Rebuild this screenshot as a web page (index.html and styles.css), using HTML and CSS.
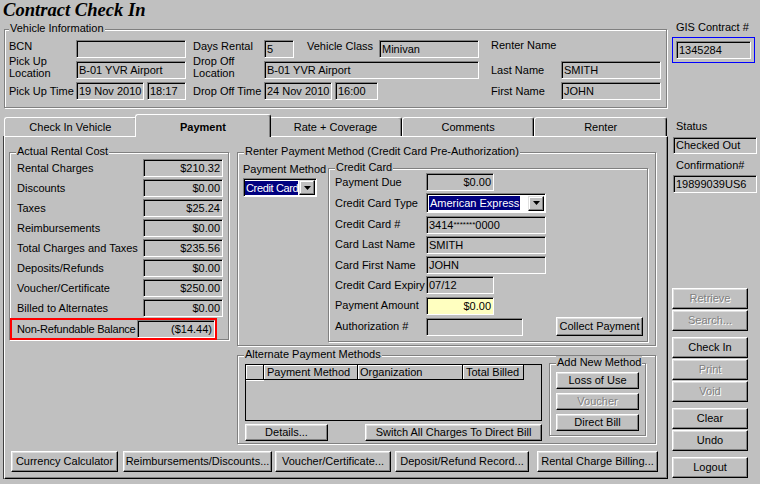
FILE: index.html
```html
<!DOCTYPE html>
<html>
<head>
<meta charset="utf-8">
<title>Contract Check In</title>
<link rel="stylesheet" href="styles.css">
</head>
<body>
<div class="win">
  <div class="leftcol">
    <h1 class="title">Contract Check In</h1>

    <div class="group vehicle">
      <span class="glabel gl-v">Vehicle Information</span>
      <div class="vgrid">
        <span class="lbl r1">BCN</span>
        <div class="fld"></div>
        <span class="lbl pl7 r1">Days Rental</span>
        <div class="sub">
          <div class="fld w30">5</div>
          <span class="lbl vclass r1">Vehicle Class</span>
          <div class="fld w100">Minivan</div>
        </div>
        <span class="lbl pl12 span2 rn">Renter Name</span>

        <span class="lbl two">Pick Up<br>Location</span>
        <div class="fld">B-01 YVR Airport</div>
        <span class="lbl pl7 two">Drop Off<br>Location</span>
        <div class="fld">B-01 YVR Airport</div>
        <span class="lbl pl12">Last Name</span>
        <div class="fld">SMITH</div>

        <span class="lbl">Pick Up Time</span>
        <div class="sub gap3"><div class="fld w68">19 Nov 2010</div><div class="fld w39">18:17</div></div>
        <span class="lbl pl7">Drop Off Time</span>
        <div class="sub gap3"><div class="fld w68">24 Nov 2010</div><div class="fld w43">16:00</div></div>
        <span class="lbl pl12">First Name</span>
        <div class="fld">JOHN</div>
      </div>
    </div>

    <div class="tabs">
      <div class="tab">Check In Vehicle</div>
      <div class="tab sel">Payment</div>
      <div class="tab">Rate + Coverage</div>
      <div class="tab">Comments</div>
      <div class="tab">Renter</div>
    </div>

    <div class="panel">
      <div class="pbody">
        <div class="group arc">
          <span class="glabel">Actual Rental Cost</span>
          <div class="arow"><span>Rental Charges</span><div class="fld val">$210.32</div></div>
          <div class="arow"><span>Discounts</span><div class="fld val">$0.00</div></div>
          <div class="arow"><span>Taxes</span><div class="fld val">$25.24</div></div>
          <div class="arow"><span>Reimbursements</span><div class="fld val">$0.00</div></div>
          <div class="arow"><span>Total Charges and Taxes</span><div class="fld val">$235.56</div></div>
          <div class="arow"><span>Deposits/Refunds</span><div class="fld val">$0.00</div></div>
          <div class="arow"><span>Voucher/Certificate</span><div class="fld val">$250.00</div></div>
          <div class="arow"><span>Billed to Alternates</span><div class="fld val">$0.00</div></div>
          <div class="arow hl"><span>Non-Refundable Balance</span><div class="fld val">($14.44)</div></div>
        </div>

        <div class="rcol">
          <div class="group rpm">
            <span class="glabel">Renter Payment Method (Credit Card Pre-Authorization)</span>
            <div class="pmcol">
              <div class="pmlbl">Payment Method</div>
              <div class="combo pm">
                <span class="hsel">Credit Card</span>
                <span class="ddb"><svg width="7" height="4" viewBox="0 0 7 4"><polygon points="0,0 7,0 3.5,4" fill="#000"/></svg></span>
              </div>
            </div>
            <div class="group cc">
              <span class="glabel">Credit Card</span>
              <div class="ccgrid">
                <span class="lbl">Payment Due</span>
                <div class="fld w68 val">$0.00</div>
                <span class="lbl">Credit Card Type</span>
                <div class="combo cct">
                  <span class="hsel">American Express</span>
                  <span class="ddb"><svg width="7" height="4" viewBox="0 0 7 4"><polygon points="0,0 7,0 3.5,4" fill="#000"/></svg></span>
                </div>
                <span class="lbl">Credit Card #</span>
                <div class="fld w120">3414<span class="ast">*******</span>0000</div>
                <span class="lbl">Card Last Name</span>
                <div class="fld w120">SMITH</div>
                <span class="lbl">Card First Name</span>
                <div class="fld w120">JOHN</div>
                <span class="lbl">Credit Card Expiry</span>
                <div class="fld w68">07/12</div>
                <span class="lbl">Payment Amount</span>
                <div class="fld w68 val yellow">$0.00</div>
                <span class="lbl">Authorization #</span>
                <div class="sub"><div class="fld w97"></div><button class="btn collect">Collect Payment</button></div>
              </div>
            </div>
          </div>

          <div class="group apm">
            <span class="glabel">Alternate Payment Methods</span>
            <div class="apm-left">
              <div class="agrid">
                <div class="ghead">
                  <div class="gc c0"></div>
                  <div class="gc c1">Payment Method</div>
                  <div class="gc c2">Organization</div>
                  <div class="gc c3">Total Billed</div>
                </div>
                <div class="ind"></div>
              </div>
              <div class="abtns">
                <button class="btn sm details">Details...</button>
                <button class="btn sm switch">Switch All Charges To Direct Bill</button>
              </div>
            </div>
            <div class="group anm">
              <span class="glabel">Add New Method</span>
              <button class="btn sm">Loss of Use</button>
              <button class="btn sm dis">Voucher</button>
              <button class="btn sm">Direct Bill</button>
            </div>
          </div>
        </div>
      </div>

      <div class="brow">
        <button class="btn b1">Currency Calculator</button>
        <button class="btn b2">Reimbursements/Discounts...</button>
        <button class="btn b3">Voucher/Certificate...</button>
        <button class="btn b4">Deposit/Refund Record...</button>
        <button class="btn b5">Rental Charge Billing...</button>
      </div>
    </div>
  </div>

  <div class="rightcol">
    <span class="rl gis">GIS Contract #</span>
    <div class="focus"><div class="fld w75">1345284</div></div>
    <span class="rl status">Status</span>
    <div class="fld rf h17">Checked Out</div>
    <span class="rl conf">Confirmation#</span>
    <div class="fld rf conff">19899039US6</div>

    <div class="rbtns">
      <button class="btn dis">Retrieve</button>
      <button class="btn dis">Search...</button>
      <button class="btn sep">Check In</button>
      <button class="btn dis">Print</button>
      <button class="btn dis">Void</button>
      <button class="btn sep">Clear</button>
      <button class="btn">Undo</button>
      <button class="btn sep">Logout</button>
    </div>
  </div>
</div>
</body>
</html>
```

FILE: styles.css
```css
* { box-sizing: border-box; }
html, body { margin: 0; padding: 0; }
body {
  background: #c0c0c0;
  font: 11px/13px "Liberation Sans", Arial, sans-serif;
  color: #000;
}
.win { display: flex; width: 760px; height: 484px; overflow: hidden; }
.leftcol { width: 668px; flex: none; }
.rightcol { width: 86px; margin-left: 4px; flex: none; display: flex; flex-direction: column; }

.title {
  margin: 0;
  height: 29px;
  padding-left: 3px;
  font: italic bold 18.6px/20px "Liberation Serif", "Times New Roman", serif;
}

/* etched group box */
.group {
  position: relative;
  border: 1px solid #808080;
  box-shadow: inset 1px 1px 0 #fff, 1px 1px 0 #fff;
}
.glabel {
  position: absolute;
  top: -8px;
  left: 6px;
  padding: 0 1px;
  background: #c0c0c0;
  line-height: 13px;
  white-space: nowrap;
}
.gl-v { left: 4px; }

/* sunken field */
.fld {
  height: 18px;
  border: 1px solid;
  border-color: #808080 #fff #fff #808080;
  box-shadow: inset 1px 1px 0 #000;
  padding: 0 2px;
  line-height: 16px;
  white-space: nowrap;
  overflow: hidden;
  background: #c0c0c0;
}
.val { text-align: right; }
.yellow { background: #ffffc0; }
.ast { font-size: 8px; vertical-align: 2px; letter-spacing: 0; }
.w30 { width: 30px; }
.w39 { width: 39px; }
.w43 { width: 43px; }
.w68 { width: 68px; }
.w75 { width: 75px; }
.w97 { width: 97px; }
.w100 { width: 100px; }
.w120 { width: 120px; }

/* raised button */
.btn {
  -webkit-appearance: none;
  appearance: none;
  margin: 0;
  padding: 0;
  height: 21px;
  border: 1px solid;
  border-color: #fff #000 #000 #fff;
  box-shadow: inset -1px -1px 0 #808080, inset 1px 1px 0 #dfdfdf;
  background: #c0c0c0;
  font: inherit;
  line-height: 19px;
  color: #000;
  text-align: center;
  white-space: nowrap;
}
.btn.sm { height: 17px; line-height: 15px; }
.btn.dis { color: #808080; text-shadow: 1px 1px 0 #fff; }

/* vehicle information */
.vehicle { margin-left: 4px; width: 663px; height: 79px; }
.vgrid {
  display: grid;
  grid-template-columns: 67px 110px 78px 215px 82px 100px;
  grid-template-rows: 18px 18px 18px;
  row-gap: 3px;
  padding: 10px 0 0 4px;
}
.lbl { align-self: center; white-space: nowrap; }
.pl7 { padding-left: 7px; }
.pl12 { padding-left: 12px; }
.span2 { grid-column: span 2; }
.r1 { margin-top: -6px; }
.rn { margin-top: -8px; }
.two { line-height: 12px; margin-top: -6px; }
.sub { display: flex; align-items: center; }
.gap3 { gap: 3px; }
.vclass { width: 85px; padding-left: 13px; align-self: center; }

/* tabs */
.tabs {
  display: flex;
  align-items: flex-end;
  margin: 5px 0 0 4px;
  width: 663px;
  height: 23px;
}
.tab {
  flex: 1 1 0;
  box-sizing: content-box;
  height: 18px;
  line-height: 18px;
  text-align: center;
  border-top: 1px solid #fff;
  border-left: 1px solid #fff;
  border-right: 1px solid #000;
  border-radius: 3px 3px 0 0;
  box-shadow: inset -1px 0 0 #808080;
  background: #c0c0c0;
  white-space: nowrap;
}
.tab.sel {
  position: relative;
  z-index: 1;
  font-weight: bold;
  padding: 3px 2px 1px;
  margin: 0 -2px -1px;
}

/* panel */
.panel {
  margin-left: 4px;
  width: 664px;
  height: 343px;
  border: 1px solid;
  border-color: #fff #000 #000 #fff;
  box-shadow: inset -1px -1px 0 #808080, -1px 0 0 #404040;
}
.pbody { display: flex; align-items: flex-start; padding: 15px 0 0 4px; }

/* actual rental cost */
.arc { width: 220px; height: 188px; padding: 6px 5px 0 0; display: flex; flex-direction: column; gap: 2px; }
.arow { display: flex; align-items: center; justify-content: space-between; height: 18px; padding-left: 7px; }
.arow span { white-space: nowrap; }
.arow .fld { width: 80px; flex: none; }
.arow.hl {
  margin: 1px 8px 0 2px;
  padding-left: 5px;
  outline: 2px solid #ff0000;
}
.arow.hl span { letter-spacing: -0.2px; }
.arow.hl .fld { width: 78px; }

.rcol { margin-left: 8px; display: flex; flex-direction: column; }

/* renter payment method */
.rpm { width: 419px; height: 194px; display: flex; align-items: flex-start; padding-left: 5px; }
.pmcol { width: 85px; margin-top: 10px; flex: none; }
.pmlbl { line-height: 13px; }

.combo {
  display: flex;
  align-items: center;
  justify-content: space-between;
  border: 1px solid;
  border-color: #808080 #fff #fff #808080;
  box-shadow: inset 1px 1px 0 #000;
  padding: 1px 1px 1px 2px;
  background: #fff;
}
.combo.pm { margin-top: 2px; width: 74px; height: 19px; padding-left: 1px; }
.combo.pm .hsel { letter-spacing: -0.35px; padding: 0 0 0 1px; }
.combo.cct { width: 120px; height: 20px; background: #fff; }
.hsel {
  background: #000080;
  color: #fff;
  line-height: 14px;
  padding: 0 1px;
  white-space: nowrap;
  overflow: hidden;
  flex: 0 1 auto;
  min-width: 0;
}
.ddb {
  flex: none;
  width: 16px;
  height: 15px;
  display: flex;
  align-items: center;
  justify-content: center;
  background: #c0c0c0;
  border: 1px solid;
  border-color: #dfdfdf #000 #000 #dfdfdf;
  box-shadow: inset -1px -1px 0 #808080, inset 1px 1px 0 #fff;
}
.ddb svg { display: block; }

.cc { margin: 15px 0 0 0; width: 320px; height: 174px; flex: none; }
.ccgrid {
  display: grid;
  grid-template-columns: 91px 1fr;
  grid-template-rows: 18px 20px 18px 18px 18px 18px 18px 19px;
  row-gap: 2.3px;
  padding: 4px 0 0 6px;
  align-items: center;
}
.collect { margin-left: 33px; width: 87px; height: 19px; line-height: 17px; }

/* alternate payment methods */
.apm { margin-top: 9px; width: 419px; height: 89px; display: flex; align-items: flex-start; padding: 8px 0 0 7px; }
.apm-left { width: 297px; flex: none; }
.agrid { position: relative; height: 57px; border: 1px solid #000; }
.ghead { display: flex; height: 15px; }
.gc {
  height: 15px;
  border-right: 1px solid #000;
  border-bottom: 1px solid #000;
  box-shadow: inset 1px 1px 0 #fff;
  line-height: 14px;
  padding-left: 3px;
  white-space: nowrap;
}
.c0 { width: 18px; }
.c1 { width: 94px; }
.c2 { width: 105px; padding-left: 2px; }
.c3 { width: 61px; }
.ind { width: 18px; height: 1px; background: #fff; }
.abtns { display: flex; justify-content: space-between; margin-top: 3px; }
.details { width: 83px; }
.switch { width: 177px; }
.anm {
  margin: -1px 0 0 7px;
  width: 97px;
  height: 73px;
  padding: 8px 0 0 6px;
  display: flex;
  flex-direction: column;
  gap: 4px;
  flex: none;
}
.anm .btn { width: 83px; }

/* bottom row */
.brow { display: flex; margin: 7px 0 0 6px; }
.b1 { width: 107px; }
.b2 { width: 149px; margin-left: 5px; }
.b3 { width: 116px; margin-left: 3px; }
.b4 { width: 134px; margin-left: 4px; }
.b5 { width: 121px; margin-left: 8px; }

/* right column */
.rl { padding-left: 4px; line-height: 13px; white-space: nowrap; }
.gis { margin-top: 21px; }
.focus { margin-top: 3px; width: 83px; border: 1px solid #0000ff; padding: 3px; }
.status { margin-top: 57px; }
.rf { margin-left: 1px; width: 84px; }
.h17 { height: 17px; line-height: 15px; margin-top: 4px; }
.conf { margin-top: 5px; }
.conff { margin-top: 3px; }
.rbtns { display: flex; flex-direction: column; gap: 1px; margin-top: 95px; }
.rbtns .btn { width: 76px; }
.rbtns .sep { margin-top: 5px; }
```
